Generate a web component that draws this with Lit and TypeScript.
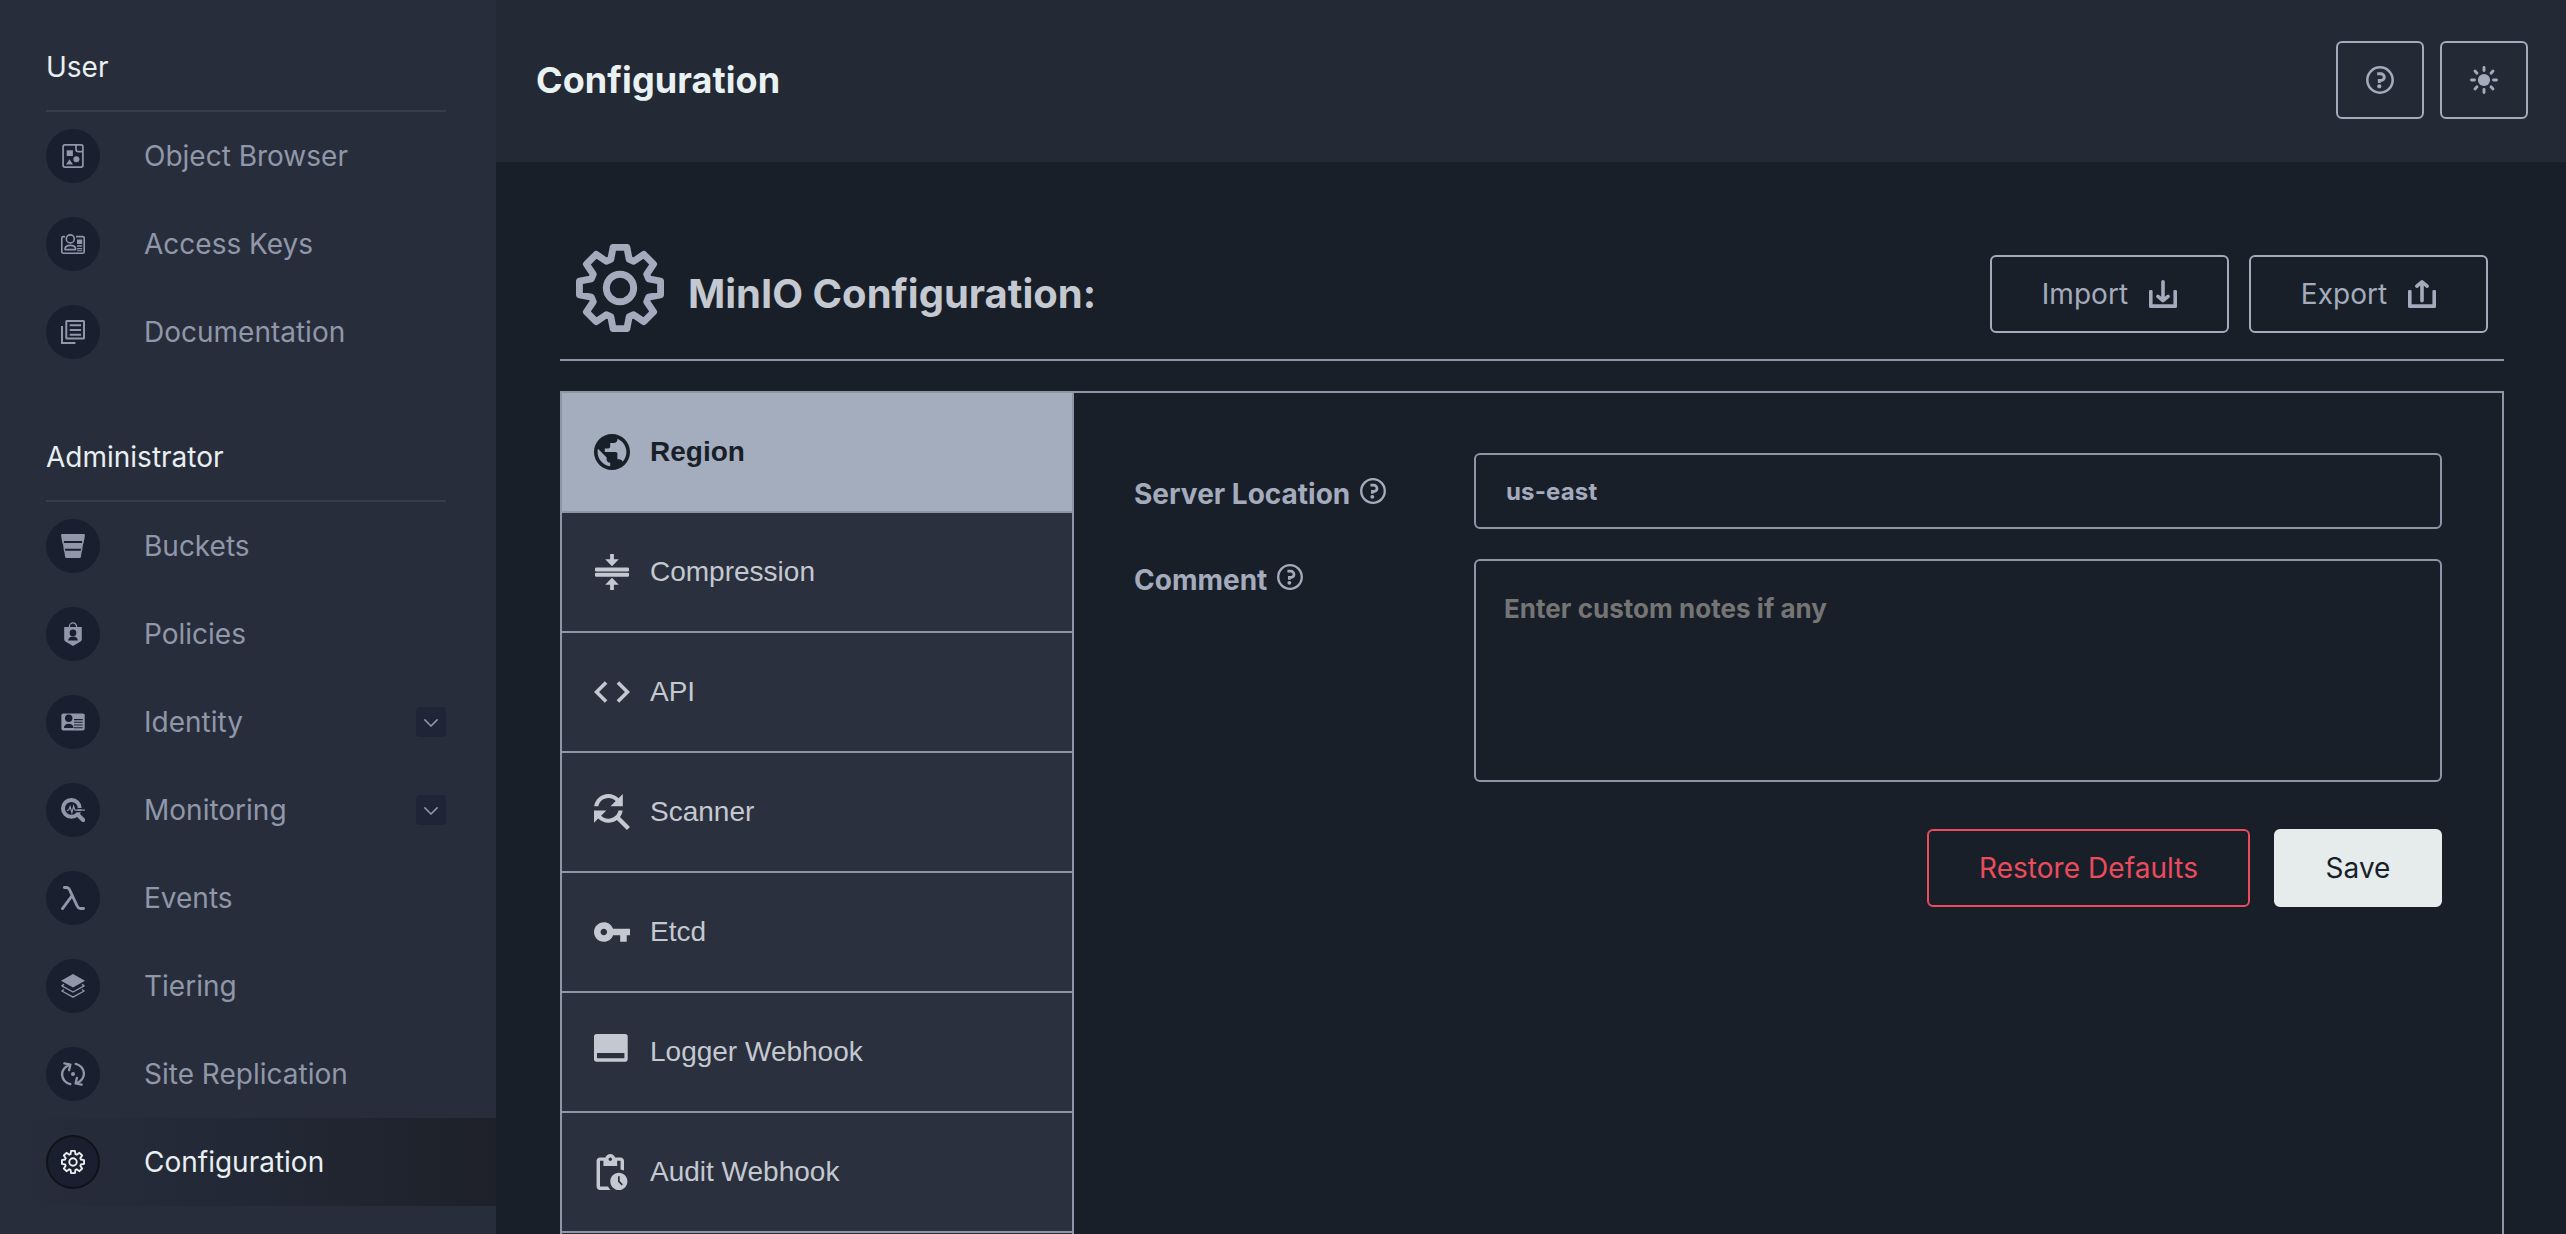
import { LitElement, html, svg, css, nothing, type SVGTemplateResult } from "lit";
import { customElement, property, state } from "lit/decorators.js";
import { classMap } from "lit/directives/class-map.js";

type Glyph = { box: string; art: SVGTemplateResult };

/* Outline of the eight-toothed gear, centred on the origin. */
const gearPath = (() => {
  const tooth: [number, number][] = [
    [-9.2, -28.6],
    [-6.9, -40.6],
    [6.9, -40.6],
    [9.2, -28.6],
  ];
  const points: string[] = [];
  for (let i = 0; i < 8; i++) {
    const a = (i * Math.PI) / 4;
    for (const [x, y] of tooth) {
      const px = x * Math.cos(a) - y * Math.sin(a);
      const py = x * Math.sin(a) + y * Math.cos(a);
      points.push(`${px.toFixed(2)} ${py.toFixed(2)}`);
    }
  }
  return `M${points.join("L")}Z`;
})();

const hole = "var(--hole, #191f2e)";

const glyphs: Record<string, Glyph> = {
  browser: {
    box: "0 0 24 24",
    art: svg`<g fill="none" stroke="currentColor" stroke-width="1.7">
        <rect x="2.1" y="0.9" width="19.8" height="22.2" rx="1.8"/>
        <path d="M15 1v4.2a2.4 2.4 0 0 0 2.4 2.4H21.8"/></g>
      <path fill="currentColor" d="M5.7 6.2h6.2v5.9H5.7zM5 20.4h7L8.5 15.3z"/>
      <circle cx="15.4" cy="15.2" r="3" fill="currentColor"/>`,
  },
  keys: {
    box: "0 0 24 24",
    art: svg`<path d="M4 4.6H2.3A1.5 1.5 0 0 0 .8 6.1v13.6a1.5 1.5 0 0 0 1.5 1.5h19.4a1.5 1.5 0 0 0 1.5-1.5V6.1a1.5 1.5 0 0 0-1.5-1.5H15" fill="none" stroke="currentColor" stroke-width="1.6"/>
      <circle cx="9.3" cy="6.9" r="4" fill="none" stroke="currentColor" stroke-width="1.6"/>
      <path d="M3.9 17.6c0-2.3 2-4.2 5.4-4.2s5.4 1.9 5.4 4.2z" fill="none" stroke="currentColor" stroke-width="1.6" stroke-linejoin="round"/>
      <path fill="currentColor" d="M16 7.6h5.2v4.3H16zM16 13.3h5.2v1.5H16zM16 15.9h5.2v1.4H16zM16 18.3h5.2v1H16z"/>`,
  },
  docs: {
    box: "0 0 24 24",
    art: svg`<g fill="none" stroke="currentColor" stroke-width="2">
        <rect x="5.3" y="1" width="17.7" height="17.6" rx=".5"/>
        <path d="M1 6v17h13.4M8.7 5.2h11.4M8.7 9.9h11.4M8.7 14.7h11.4"/></g>`,
  },
  buckets: {
    box: "0 0 24 24",
    art: svg`<path fill="currentColor" d="M1.4 0h21.2c.9 0 1.4.6 1.3 1.4L23 7H1L.1 1.400C0 .6.5 0 1.4 0zM1.800 8.900h20.400l-.9 5.900H2.700zM3.200 16.700h17.600l-.9 6c-.1.8-.6 1.300-1.400 1.300h-13c-.8 0-1.300-.5-1.400-1.300z"/>
      <path fill="currentColor" d="M1 6.500h1.900v3H1.500zM21.100 6.500H23l-.5 3h-1.400zM2.500 14.500h1.600v3H3zM19.900 14.500h1.600l-.5 3h-1.100z"/>`,
  },
  policies: {
    box: "0 0 24 24",
    art: svg`<path d="M8.400 6V4.500a3.600 3.600 0 0 1 7.200 0V6" fill="none" stroke="currentColor" stroke-width="1.300"/>
      <path fill="currentColor" d="M3.200 5h17.600v12.200c0 1.200-.6 1.900-1.600 2.600L12 24l-7.200-4.200c-1-.7-1.600-1.400-1.600-2.600z"/>
      <circle cx="12" cy="10.900" r="3.300" fill="${hole}"/>
      <path fill="${hole}" d="M7.200 18.500c0-2.200 1.700-4 4.800-4s4.800 1.800 4.800 4z"/>`,
  },
  identity: {
    box: "0 0 24 24",
    art: svg`<rect x=".4" y="3.400" width="23.300" height="17" rx="1.900" fill="currentColor"/>
      <circle cx="7.700" cy="8.300" r="3.700" fill="${hole}"/>
      <path fill="${hole}" d="M2.900 18.100c0-2.700 1.800-4.300 4.800-4.300s4.800 1.600 4.800 4.300z"/>
      <path d="M13 9.600h8.700M13 12.300h8.700M13 15h8.700M13 17.700h8.700" stroke="${hole}" stroke-width="1.100"/>`,
  },
  monitoring: {
    box: "0 0 24 24",
    art: svg`<circle cx="10.400" cy="10.400" r="8.400" fill="none" stroke="currentColor" stroke-width="4"/>
      <path d="M16.800 16.800l5.300 5.300" stroke="currentColor" stroke-width="4.200" stroke-linecap="round"/>
      <path d="M13 10.700h11M13 13.500h11" stroke="${hole}" stroke-width="1.300"/>
      <path d="M6 12.800l1.800-1 1.300-3.300 1.800 6.200 1.700-6.700 1.400 4.100h10" fill="none" stroke="currentColor" stroke-width="1.100"/>`,
  },
  events: {
    box: "0 0 24 24",
    art: svg`<path d="M3.300 1.500h1.800c1.600 0 2.600.6 3.400 2.200l7.600 16.100c.8 1.800 1.700 2.700 3.300 2.700h3.200M11.300 9.400L1.500 22.600" fill="none" stroke="currentColor" stroke-width="2.800" stroke-linecap="round"/>`,
  },
  tiering: {
    box: "0 0 24 24",
    art: svg`<path fill="currentColor" d="M12 0l12 6.800-12 6.700L0 6.800z"/>
      <path d="M3 10.400L.9 11.900 12 18l11.100-6.100-2.100-1.500M3 15.500L.9 17 12 23.200 23.100 17 21 15.500" fill="none" stroke="currentColor" stroke-width="1.400" stroke-linejoin="round"/>`,
  },
  replication: {
    box: "0 0 24 24",
    art: svg`<g fill="none" stroke="currentColor" stroke-width="2.300" stroke-linecap="round" stroke-linejoin="round">
        <path d="M9.300 22.200C4.700 21.200 1.100 17.100 1.100 12.300c0-3.600 1.900-6.800 6.500-9.400M3.400 1.300l6 1.300-1.300 5.600"/>
        <path d="M14.700 1.800c4.600 1 8.200 5.100 8.200 9.900 0 3.600-1.900 6.800-6.500 9.400M20.600 22.700l-6-1.300 1.300-5.600"/></g>
      <circle cx="12" cy="12" r="2" fill="currentColor"/>`,
  },
  gear: {
    box: "-44 -44 88 88",
    art: svg`<g fill="none" stroke="currentColor" stroke-width="6.900" stroke-linejoin="round">
      <path d="${gearPath}"/><circle r="13.700"/></g>`,
  },
  chevron: {
    box: "0 0 14 8",
    art: svg`<path d="M.9.900L7 7 13.100.9" fill="none" stroke="currentColor" stroke-width="1.500" stroke-linecap="round"/>`,
  },
  help: {
    box: "0 0 28 28",
    art: svg`<circle cx="14" cy="14" r="12.700" fill="none" stroke="currentColor" stroke-width="2.500"/>
      <path d="M11.200 7.700h3.600a3.500 3.500 0 0 1 3.500 3.500c0 2.100-1.500 3.300-5 3.300v2.400" fill="none" stroke="currentColor" stroke-width="2.900"/>
      <circle cx="13.300" cy="20.300" r="2.100" fill="currentColor"/>`,
  },
  sun: {
    box: "0 0 28 28",
    art: svg`<circle cx="14" cy="14" r="6.100" fill="currentColor"/>
      <path d="M14 1.500v3M14 23.500v3M1.500 14h3M23.500 14h3M5 5l2 2.200M23 5l-2 2.200M5 23l2-2.200M23 23l-2-2.200" stroke="currentColor" stroke-width="2.900" stroke-linecap="round"/>`,
  },
  importing: {
    box: "0 0 28 28",
    art: svg`<path fill="currentColor" d="M1.300 10h1a1.300 1.300 0 0 1 1.300 1.300v13h20.800v-13a1.300 1.300 0 0 1 1.300-1.300h1a1.300 1.300 0 0 1 1.300 1.300v15.200a1.500 1.500 0 0 1-1.500 1.500h-25A1.500 1.500 0 0 1 0 26.500V11.300A1.300 1.300 0 0 1 1.300 10z"/>
      <path d="M14 1.800v18.500M8.900 16.400l5.100 4.300 5.100-4.300" fill="none" stroke="currentColor" stroke-width="3.600" stroke-linecap="round" stroke-linejoin="round"/>`,
  },
  exporting: {
    box: "0 0 28 28",
    art: svg`<path fill="currentColor" d="M1.300 10h1a1.300 1.300 0 0 1 1.300 1.300v13h20.800v-13a1.300 1.300 0 0 1 1.300-1.300h1a1.300 1.300 0 0 1 1.300 1.300v15.200a1.500 1.500 0 0 1-1.500 1.500h-25A1.500 1.500 0 0 1 0 26.500V11.300A1.300 1.300 0 0 1 1.300 10z"/>
      <path d="M14 2.500v18.300M8.900 6.200L14 1.900l5.100 4.300" fill="none" stroke="currentColor" stroke-width="3.600" stroke-linecap="round" stroke-linejoin="round"/>`,
  },
  region: {
    box: "2 2 20 20",
    art: svg`<path fill="currentColor" d="M12 2C6.480 2 2 6.480 2 12s4.480 10 10 10 10-4.480 10-10S17.520 2 12 2zm-1 17.930c-3.950-.49-7-3.850-7-7.930 0-.62.080-1.210.21-1.790L9 15v1c0 1.100.9 2 2 2v1.930zm6.900-2.540c-.26-.81-1-1.390-1.900-1.390h-1v-3c0-.55-.45-1-1-1H8v-2h2c.55 0 1-.45 1-1V7h2c1.100 0 2-.9 2-2v-.41c2.930 1.190 5 4.060 5 7.410 0 2.080-.8 3.970-2.100 5.390z"/>`,
  },
  compression: {
    box: "0 0 36 36",
    art: svg`<path fill="currentColor" d="M16.100 0h3.800v5.300h4.900L18 12.200l-6.800-6.900h4.900zM16.100 36h3.800v-5.300h4.900L18 23.800l-6.800 6.900h4.900z"/>
      <rect x="1" y="13.600" width="34" height="3.900" rx="1.200" fill="currentColor"/>
      <rect x="1" y="18.800" width="34" height="3.900" rx="1.200" fill="currentColor"/>`,
  },
  api: {
    box: "2 2 20 20",
    art: svg`<path fill="currentColor" d="M9.400 16.600L4.800 12l4.600-4.600L8 6l-6 6 6 6 1.400-1.400zm5.200 0l4.600-4.600-4.600-4.600L16 6l6 6-6 6-1.400-1.400z"/>`,
  },
  scanner: {
    box: "4 4 17.5 17.5",
    art: svg`<path fill="currentColor" d="M11 6c1.380 0 2.630.56 3.540 1.460L12 10h6V4l-2.050 2.050C14.680 4.780 12.930 4 11 4c-3.530 0-6.430 2.610-6.920 6H6.100c.46-2.280 2.480-4 4.900-4zm5.640 9.140c.66-.9 1.120-1.970 1.280-3.140H15.900c-.46 2.280-2.480 4-4.900 4-1.380 0-2.630-.56-3.540-1.460L10 12H4v6l2.050-2.050C7.320 17.220 9.070 18 11 18c1.550 0 2.980-.51 4.140-1.360L20 21.490 21.490 20l-4.850-4.860z"/>`,
  },
  etcd: {
    box: "1 1 22 22",
    art: svg`<path fill="currentColor" d="M12.650 10C11.830 7.670 9.610 6 7 6c-3.310 0-6 2.690-6 6s2.690 6 6 6c2.610 0 4.830-1.670 5.650-4H17v4h4v-4h2v-4H12.650zM7 14c-1.100 0-2-.9-2-2s.9-2 2-2 2 .9 2 2-.9 2-2 2z"/>`,
  },
  logger: {
    box: "0 0 36 36",
    art: svg`<path fill="currentColor" fill-rule="evenodd" d="M2.600 0h28.500a2.600 2.600 0 0 1 2.600 2.600v22.500a2.600 2.600 0 0 1-2.600 2.600H2.600A2.600 2.600 0 0 1 0 25.100V2.600A2.600 2.600 0 0 1 2.600 0zM3 19v5.300h27.400V19z"/>`,
  },
  audit: {
    box: "2.5 1 21 21",
    art: svg`<path fill="currentColor" d="M17 12c-2.760 0-5 2.240-5 5s2.240 5 5 5 5-2.240 5-5-2.240-5-5-5zm1.650 7.350L16.500 17.200V14h1v2.790l1.850 1.850-.7.71zM18 3h-3.180C14.400 1.840 13.300 1 12 1s-2.400.84-2.820 2H6c-1.100 0-2 .9-2 2v15c0 1.100.9 2 2 2h6.110a6.743 6.743 0 0 1-1.420-2H6V5h2v3h8V5h2v5.080c.71.100 1.380.310 2 .600V5c0-1.100-.9-2-2-2zm-6 2c-.55 0-1-.45-1-1s.45-1 1-1 1 .45 1 1-.45 1-1 1z"/>`,
  },
};

@customElement("mc-icon")
class McIcon extends LitElement {
  @property() name = "";

  static styles = css`
    :host {
      display: block;
      flex: none;
    }
    .art {
      display: block;
      width: 100%;
      height: 100%;
    }
  `;

  render() {
    const glyph = glyphs[this.name];
    if (!glyph) return nothing;
    return html`<svg class="art" viewBox=${glyph.box} aria-hidden="true">${glyph.art}</svg>`;
  }
}

type NavItem = { icon: string; label: string; group?: boolean };

const navigation: { title: string; items: NavItem[] }[] = [
  {
    title: "User",
    items: [
      { icon: "browser", label: "Object Browser" },
      { icon: "keys", label: "Access Keys" },
      { icon: "docs", label: "Documentation" },
    ],
  },
  {
    title: "Administrator",
    items: [
      { icon: "buckets", label: "Buckets" },
      { icon: "policies", label: "Policies" },
      { icon: "identity", label: "Identity", group: true },
      { icon: "monitoring", label: "Monitoring", group: true },
      { icon: "events", label: "Events" },
      { icon: "tiering", label: "Tiering" },
      { icon: "replication", label: "Site Replication" },
      { icon: "gear", label: "Configuration" },
    ],
  },
];

@customElement("mc-sidebar")
class McSidebar extends LitElement {
  @property() active = "";

  static styles = css`
    :host {
      display: flex;
      flex-direction: column;
      flex: none;
      width: 496px;
      overflow: hidden;
      background: #282d3c;
      color: #9097a8;
    }
    .section {
      display: flex;
      flex-direction: column;
      padding-bottom: 58px;
    }
    .section:first-child {
      padding-top: 44px;
    }
    .title {
      margin: 0 50px 0 46px;
      padding: 3px 0 23px;
      border-bottom: 2px solid #373c4c;
      color: #e9eff0;
      font-size: 28px;
      line-height: 40px;
    }
    .item {
      display: flex;
      align-items: center;
      height: 88px;
      padding: 0 50px 0 46px;
      font-size: 28px;
      line-height: 40px;
    }
    .bullet {
      display: flex;
      align-items: center;
      justify-content: center;
      box-sizing: border-box;
      width: 54px;
      height: 54px;
      margin-right: 44px;
      border-radius: 50%;
      background: #191f2e;
    }
    .bullet mc-icon {
      width: 24px;
      height: 24px;
    }
    .label {
      flex: 1;
    }
    .toggle {
      display: flex;
      align-items: center;
      justify-content: center;
      width: 30px;
      height: 30px;
      padding-top: 2px;
      box-sizing: border-box;
      border-radius: 4px;
      background: #1f2437;
    }
    .toggle mc-icon {
      width: 14px;
      height: 8px;
    }
    .active {
      background: linear-gradient(90deg, #282d3c, #222835 50%, #1e2129);
      color: #e9eff0;
    }
    .active .bullet {
      border: 2px solid #0f1219;
    }
  `;

  render() {
    return navigation.map(
      (section) => html`<nav class="section">
        <div class="title">${section.title}</div>
        ${section.items.map(
          (item) => html`<div class=${classMap({ item: true, active: item.label === this.active })}>
            <span class="bullet"><mc-icon name=${item.icon}></mc-icon></span>
            <span class="label">${item.label}</span>
            ${item.group ? html`<span class="toggle"><mc-icon name="chevron"></mc-icon></span>` : nothing}
          </div>`
        )}
      </nav>`
    );
  }
}

const tabs = [
  { icon: "region", label: "Region" },
  { icon: "compression", label: "Compression" },
  { icon: "api", label: "API" },
  { icon: "scanner", label: "Scanner" },
  { icon: "etcd", label: "Etcd" },
  { icon: "logger", label: "Logger Webhook" },
  { icon: "audit", label: "Audit Webhook" },
];

@customElement("app-root")
class AppRoot extends LitElement {
  @state() private tab = "Region";

  static styles = css`
    :host {
      display: flex;
      height: 100vh;
      overflow: hidden;
      background: #191f28;
      color: #c4c8d0;
      font-family: Inter, sans-serif;
    }
    .page {
      flex: 1;
      display: flex;
      flex-direction: column;
      min-width: 0;
    }
    .header {
      display: flex;
      flex: none;
      align-items: center;
      justify-content: space-between;
      box-sizing: border-box;
      height: 162px;
      padding: 0 38px 2px 40px;
      background: #242a35;
    }
    .page-title {
      margin: 0;
      color: #e9f1f2;
      font-size: 36px;
      font-weight: 700;
      letter-spacing: 0.08px;
      line-height: 48px;
    }
    .actions {
      display: flex;
      gap: 16px;
    }
    .button {
      display: flex;
      align-items: center;
      justify-content: center;
      box-sizing: border-box;
      height: 78px;
      margin: 0;
      padding: 0;
      border: 2px solid #a3abbd;
      border-radius: 6px;
      background: none;
      color: #a3abbd;
      font: 400 28px/40px Inter, sans-serif;
      letter-spacing: 0.05px;
    }
    .button mc-icon {
      width: 28px;
      height: 28px;
    }
    .square {
      width: 88px;
    }
    .content {
      flex: 1;
      display: flex;
      flex-direction: column;
      min-height: 0;
      padding: 74px 62px 0 64px;
    }
    .summary {
      display: flex;
      flex: none;
      align-items: center;
      box-sizing: border-box;
      height: 125px;
      padding: 0 16px 9px;
      border-bottom: 2px solid #8e95a7;
    }
    .summary .gear {
      width: 88px;
      height: 88px;
      margin: -5px 24px 5px 0;
      color: #a3abbd;
    }
    .heading {
      flex: 1;
      margin: 0;
      padding-top: 2px;
      font-size: 40px;
      font-weight: 700;
      line-height: 48px;
    }
    .summary .actions {
      gap: 20px;
      padding-top: 1px;
    }
    .summary .button {
      width: 239px;
      gap: 21px;
    }
    .panel {
      flex: none;
      display: flex;
      height: 1200px;
      margin-top: 30px;
      border: 2px solid #8e95a7;
    }
    .tabs {
      flex: none;
      width: 510px;
      border-right: 2px solid #8e95a7;
      background: #2b303e;
    }
    .tab {
      display: flex;
      align-items: center;
      gap: 20px;
      height: 118px;
      padding-left: 32px;
      border-bottom: 2px solid #8e95a7;
      font: 28px/36px "Liberation Sans", Arial, sans-serif;
    }
    .tab mc-icon {
      width: 36px;
      height: 36px;
    }
    .selected {
      background: #a4adbe;
      color: #191f28;
      font-weight: 700;
    }
    .form {
      flex: 1;
      display: flex;
      flex-direction: column;
      padding: 60px;
    }
    .field {
      display: flex;
      margin-bottom: 30px;
    }
    .field-label {
      display: flex;
      flex: none;
      gap: 10px;
      box-sizing: border-box;
      width: 340px;
      padding-top: 1px;
      color: #a3abbd;
      font-size: 28px;
      font-weight: 700;
      line-height: 40px;
    }
    .field-label mc-icon {
      width: 26px;
      height: 26px;
      margin-top: 4px;
    }
    .beside-input {
      padding-top: 21px;
    }
    .control {
      flex: 1;
      display: block;
      box-sizing: border-box;
      min-width: 0;
      margin: 0;
      border: 2px solid #8e95a7;
      border-radius: 6px;
      background: none;
      color: #a3abbd;
      font-family: Inter, sans-serif;
      font-weight: 700;
      resize: none;
    }
    .line {
      height: 76px;
      padding: 0 30px;
      font-size: 24px;
      letter-spacing: 0.15px;
    }
    .notes {
      height: 223px;
      padding: 31px 28px;
      font-size: 26px;
      line-height: 34px;
      letter-spacing: 0.03px;
    }
    .notes::placeholder {
      color: #757575;
      opacity: 1;
    }
    .form .actions {
      justify-content: flex-end;
      gap: 24px;
      margin-top: 17px;
    }
    .danger {
      width: 323px;
      border-color: #eb4b5d;
      color: #eb4b5d;
    }
    .primary {
      width: 168px;
      border-color: #e6ebeb;
      background: #e6ebeb;
      color: #181f2a;
    }
  `;

  render() {
    return html`
      <mc-sidebar active="Configuration"></mc-sidebar>
      <div class="page">
        <header class="header">
          <h1 class="page-title">Configuration</h1>
          <div class="actions">
            <button class="button square" aria-label="Help"><mc-icon name="help"></mc-icon></button>
            <button class="button square" aria-label="Theme"><mc-icon name="sun"></mc-icon></button>
          </div>
        </header>
        <main class="content">
          <div class="summary">
            <mc-icon class="gear" name="gear"></mc-icon>
            <h2 class="heading">MinIO Configuration:</h2>
            <div class="actions">
              <button class="button">Import<mc-icon name="importing"></mc-icon></button>
              <button class="button">Export<mc-icon name="exporting"></mc-icon></button>
            </div>
          </div>
          <div class="panel">
            <div class="tabs">
              ${tabs.map(
                (tab) => html`<div
                  class=${classMap({ tab: true, selected: tab.label === this.tab })}
                  @click=${() => (this.tab = tab.label)}
                >
                  <mc-icon name=${tab.icon}></mc-icon>${tab.label}
                </div>`
              )}
            </div>
            <div class="form">
              <div class="field">
                <label class="field-label beside-input">Server Location<mc-icon name="help"></mc-icon></label>
                <input class="control line" .value=${"us-east"} />
              </div>
              <div class="field">
                <label class="field-label">Comment<mc-icon name="help"></mc-icon></label>
                <textarea class="control notes" placeholder="Enter custom notes if any"></textarea>
              </div>
              <div class="actions">
                <button class="button danger">Restore Defaults</button>
                <button class="button primary">Save</button>
              </div>
            </div>
          </div>
        </main>
      </div>
    `;
  }
}
